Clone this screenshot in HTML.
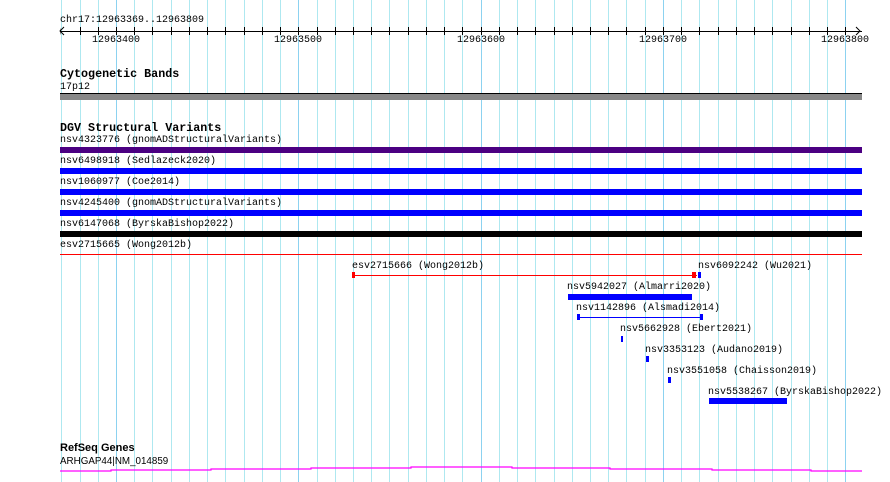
<!DOCTYPE html>
<html><head><meta charset="utf-8"><style>
body{margin:0;width:890px;height:482px;background:#fff;position:relative;overflow:hidden;font-family:"Liberation Mono",monospace;font-size:10px;color:#000}
.g{position:absolute;top:0;height:482px;width:1px;background:#aee8f0}
.M{background:#8cd2f0}
.t{position:absolute;white-space:pre;line-height:11px}
.h{position:absolute;font-weight:bold;font-size:11.7px;line-height:12px;white-space:pre}
.b{position:absolute}
.tk{position:absolute;top:27px;height:8px;width:1px;background:#000}
</style></head><body>
<div id="grid"></div>
<div class="t" style="left:60px;top:15px">chr17:12963369..12963809</div>
<div class="b" style="left:60px;top:31px;width:802px;height:1px;background:#000"></div>
<div class="b" style="left:60px;top:28px;width:0;height:0;border-top:3px solid transparent;border-bottom:4px solid transparent;border-right:1px solid #000"></div>
<svg class="b" style="left:0;top:0" width="890" height="40"><polyline points="64,27 60,31 64,35" fill="none" stroke="#000"/><polyline points="856,27 860,31 856,35" fill="none" stroke="#000"/></svg>
<div id="ticks"></div>
<div class="t" style="left:92px;top:35px">12963400</div>
<div class="t" style="left:274px;top:35px">12963500</div>
<div class="t" style="left:457px;top:35px">12963600</div>
<div class="t" style="left:639px;top:35px">12963700</div>
<div class="t" style="left:821px;top:35px">12963800</div>

<div class="h" style="left:60px;top:68px">Cytogenetic Bands</div>
<div class="t" style="left:60px;top:82px">17p12</div>
<div class="b" style="left:60px;top:93px;width:802px;height:1px;background:#000"></div>
<div class="b" style="left:60px;top:94px;width:802px;height:6px;background:#888"></div>

<div class="h" style="left:60px;top:122px">DGV Structural Variants</div>
<div class="t" style="left:60px;top:135px">nsv4323776 (gnomADStructuralVariants)</div>
<div class="b" style="left:60px;top:147px;width:802px;height:6px;background:#4b0082"></div>
<div class="t" style="left:60px;top:156px">nsv6498918 (Sedlazeck2020)</div>
<div class="b" style="left:60px;top:168px;width:802px;height:6px;background:#0000ff"></div>
<div class="t" style="left:60px;top:177px">nsv1060977 (Coe2014)</div>
<div class="b" style="left:60px;top:189px;width:802px;height:6px;background:#0000ff"></div>
<div class="t" style="left:60px;top:198px">nsv4245400 (gnomADStructuralVariants)</div>
<div class="b" style="left:60px;top:210px;width:802px;height:6px;background:#0000ff"></div>
<div class="t" style="left:60px;top:219px">nsv6147068 (ByrskaBishop2022)</div>
<div class="b" style="left:60px;top:231px;width:802px;height:6px;background:#000"></div>
<div class="t" style="left:60px;top:240px">esv2715665 (Wong2012b)</div>
<div class="b" style="left:60px;top:254px;width:802px;height:1px;background:#f00"></div>

<div class="t" style="left:352px;top:261px">esv2715666 (Wong2012b)</div>
<div class="b" style="left:352px;top:275px;width:345px;height:1px;background:#f00"></div>
<div class="b" style="left:352px;top:272px;width:3px;height:6px;background:#f00"></div>
<div class="b" style="left:692px;top:272px;width:4px;height:6px;background:#f00"></div>
<div class="t" style="left:698px;top:261px">nsv6092242 (Wu2021)</div>
<div class="b" style="left:698px;top:272px;width:3px;height:6px;background:#00f"></div>

<div class="t" style="left:567px;top:282px">nsv5942027 (Almarri2020)</div>
<div class="b" style="left:568px;top:294px;width:124px;height:6px;background:#00f"></div>
<div class="t" style="left:576px;top:303px">nsv1142896 (Alsmadi2014)</div>
<div class="b" style="left:577px;top:317px;width:126px;height:1px;background:#00f"></div>
<div class="b" style="left:577px;top:314px;width:3px;height:6px;background:#00f"></div>
<div class="b" style="left:700px;top:314px;width:3px;height:6px;background:#00f"></div>
<div class="t" style="left:620px;top:324px">nsv5662928 (Ebert2021)</div>
<div class="b" style="left:621px;top:336px;width:2px;height:6px;background:#00f"></div>
<div class="t" style="left:645px;top:345px">nsv3353123 (Audano2019)</div>
<div class="b" style="left:646px;top:356px;width:3px;height:6px;background:#00f"></div>
<div class="t" style="left:667px;top:366px">nsv3551058 (Chaisson2019)</div>
<div class="b" style="left:668px;top:377px;width:3px;height:6px;background:#00f"></div>
<div class="t" style="left:708px;top:387px">nsv5538267 (ByrskaBishop2022)</div>
<div class="b" style="left:709px;top:398px;width:78px;height:6px;background:#00f"></div>

<div class="h" style="left:60px;top:442px;font-family:'Liberation Sans',sans-serif;font-size:11px">RefSeq Genes</div>
<div class="t" style="left:60px;top:456px;font-family:'Liberation Sans',sans-serif;font-size:10px;transform:scaleX(0.98);transform-origin:left">ARHGAP44|NM_014859</div>
<svg class="b" style="left:0;top:460px" width="890" height="20"><polyline fill="none" stroke="#f0f" stroke-width="1.2" points="60,11 111,11 111,10 211,10 211,9 311,9 311,8 411,8 411,7 512,7 512,8 610,8 610,9 712,9 712,10 811,10 811,11 862,11"/></svg>
<script>
var g=document.getElementById('grid'),h='';
for(var i=0;i<46;i++){var x=Math.round(24.85+i*18.23);if(x<59||x>862)continue;var maj=((i-5)%10===0||(i-5)%5===0&&false);h+='<div class="g'+(((i-5)%10===0)?' M':'')+'" style="left:'+x+'px"></div>';}
g.innerHTML=h;
var t=document.getElementById('ticks'),s='';
for(var i=0;i<46;i++){var x=Math.round(24.85+i*18.23);if(x<62||x>858)continue;s+='<div class="tk" style="left:'+x+'px"></div>';}
t.innerHTML=s;
</script>
</body></html>
